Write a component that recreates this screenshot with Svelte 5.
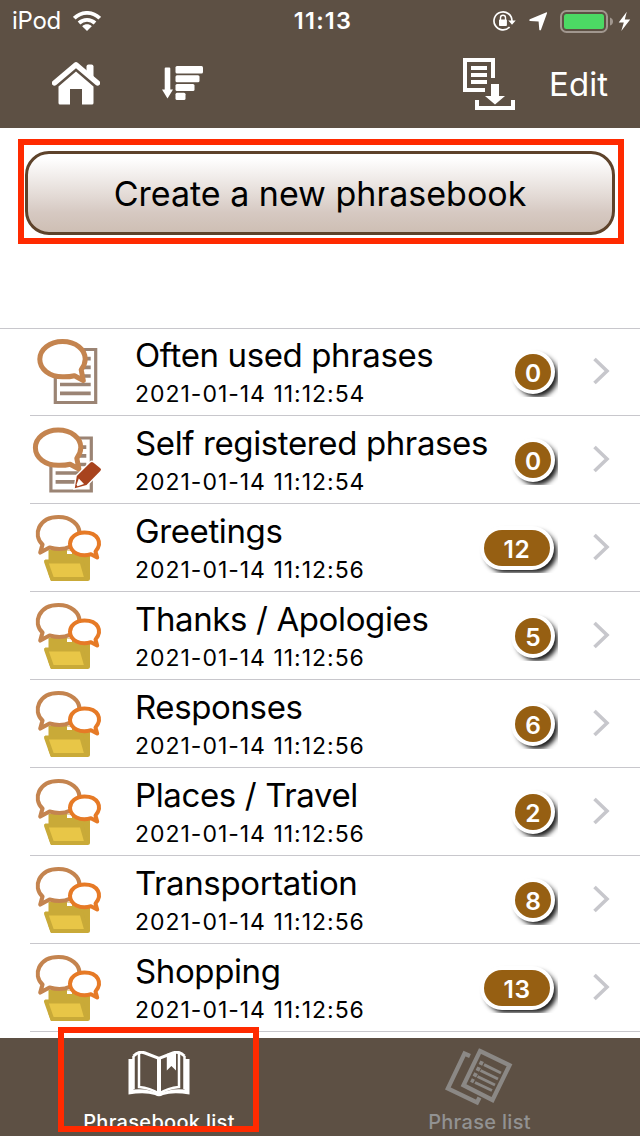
<script>
  const books = [
    { title: 'Often used phrases', date: '2021-01-14 11:12:54', count: 0, icon: 'doc' },
    { title: 'Self registered phrases', date: '2021-01-14 11:12:54', count: 0, icon: 'pencil' },
    { title: 'Greetings', date: '2021-01-14 11:12:56', count: 12, icon: 'folder' },
    { title: 'Thanks / Apologies', date: '2021-01-14 11:12:56', count: 5, icon: 'folder' },
    { title: 'Responses', date: '2021-01-14 11:12:56', count: 6, icon: 'folder' },
    { title: 'Places / Travel', date: '2021-01-14 11:12:56', count: 2, icon: 'folder' },
    { title: 'Transportation', date: '2021-01-14 11:12:56', count: 8, icon: 'folder' },
    { title: 'Shopping', date: '2021-01-14 11:12:56', count: 13, icon: 'folder' }
  ];
</script>

<div class="screen">
  <header>
    <div class="status">
      <div class="carrier">
        <span>iPod</span>
        <svg width="28" height="20" viewBox="0 0 28 20">
          <g fill="none" stroke="#fff" stroke-width="3.8">
            <path d="M1.3 7.2C8.5 .1 19.5 .1 26.7 7.2" />
            <path d="M6 12C10.6 7.7 17.4 7.7 22 12" />
          </g>
          <path d="M9.2 15.2C12 12.7 16 12.7 18.8 15.2L14 20Z" fill="#fff" />
        </svg>
      </div>
      <div class="clock">11:13</div>
      <div class="indicators">
        <svg width="140" height="26" viewBox="0 0 140 26">
          <g fill="none" stroke="#fff" stroke-width="1.7">
            <path d="M17.600 19A9 9 0 1 1 20 13" />
            <path d="M8.500 12V9.800a2.500 2.500 0 0 1 5 0V12" stroke-width="1.400" />
          </g>
          <path d="M16.300 12.500H23.700L20 16.800ZM7.900 11.500h6.200q.8 0 .8.8v4.800q0 .9-.8.9H7.900q-.9 0-.9-.9v-4.800q0-.8.9-.8Z" fill="#fff" />
          <path d="M55 5.200L49 21.800Q48 23 47.300 21.800L46.600 13.400L38 12.900Q36.300 12.300 37.800 11.300L54 4.400Q55.400 4 55 5.200Z" fill="#fff" />
          <rect x="69" y="3" width="46" height="21" rx="5.500" fill="none" stroke="#a1978f" stroke-width="2" />
          <rect x="72" y="6" width="40" height="15" rx="2.500" fill="#4cd964" />
          <path d="M118 9.500Q121 10.500 121 13.500T118 17.500Z" fill="#a1978f" />
          <path d="M134.800 3.700L126.700 14.600H131.800L129.300 23L138.200 11.500H132.800Z" fill="#fff" />
        </svg>
      </div>
    </div>
    <nav>
      <svg class="home" width="48" height="43" viewBox="0 0 48 43" fill="#fff">
        <path d="M2.500 21L24 2.800L45.500 21" fill="none" stroke="#fff" stroke-width="5.400" stroke-linecap="round" stroke-linejoin="round" />
        <path d="M34.500 4.500q0-2 2-2h3q2 0 2 2V18l-7-6Z" />
        <path d="M24 9.500L41.500 24.500V41q0 1.500-1.500 1.500H30V27H18V42.500H8Q6.500 42.500 6.500 41V24.500Z" />
      </svg>
      <svg class="sort" width="42" height="35" viewBox="0 0 42 35" fill="#fff">
        <path d="M2.700 2.500q0-1 1-1h3.600q1 0 1 1V23.500H11L5.500 32.500L0 23.500H2.700Z" />
        <rect x="13.500" y="0" width="27.500" height="7.500" rx="1.500" />
        <rect x="13.500" y="9.300" width="24" height="7" rx="1.500" />
        <rect x="13.500" y="18" width="19" height="7" rx="1.500" />
        <rect x="13.500" y="26.800" width="10" height="7.200" rx="1.500" />
      </svg>
      <svg class="download" width="52" height="52" viewBox="0 0 52 52" fill="#fff">
        <path d="M0 0H32V20H28V4H4V30H22V34H0Z" />
        <path d="M8 8H24V12H8ZM8 15H24V19H8ZM8 22H24V26H8Z" />
        <path d="M28 26H36V38H42L32 46.500L22 38H28Z" />
        <path d="M12 42H16V48H48V42H52V52H12Z" />
      </svg>
      <span class="edit">Edit</span>
    </nav>
  </header>

  <section class="create">
    <div class="highlight">
      <button>Create a new phrasebook</button>
    </div>
  </section>

  <main>
    {#each books as b}
      <div class="row">
        <svg class="icon" width="100" height="88" viewBox="0 0 100 88">
          {#if b.icon === 'folder'}
            <path d="M28.500 46H70V74.500Q70 77 67.500 77H31L28.500 70Z" fill="#c9aa38" />
            <path d="M47 46.500H52V50H47Z" fill="#fff" />
            <path d="M26 57.500H61.500L66.500 75H32.200Z" fill="#e8c647" stroke="#c9aa38" stroke-width="4" stroke-linejoin="round" />
            <path d="M22.500 40.500C12.500 31 18.500 13 38.500 13C51 13 59.500 20.500 59.500 29C59.500 41.500 45 48 29.500 43.500L20.300 48.500Z" fill="#fff" stroke="#c4844f" stroke-width="4.200" stroke-linejoin="round" />
            <path d="M75.500 47.500C83 39 78 28.500 64.500 28.500C55.500 28.500 50 34 50 39.800C50 48.500 60.500 53.500 71 50.200L77.200 53.500Z" fill="#fff" stroke="#e67a26" stroke-width="4" stroke-linejoin="round" />
          {:else}
            <g transform={b.icon === 'pencil' ? 'translate(-4.400 .5)' : 'translate(0 0)'}>
              <path d="M35.300 21.500H75.700V74.500H35.300Z" fill="#fff" stroke="#9b8474" stroke-width="3.200" />
              <path d="M40 30.700H70.700M40 39.400H70.700M40 48H70.700M40 56.500H70.700M40 65.300H70.700" stroke="#9b8474" stroke-width="3.700" />
              <path d="M42.500 13.500C56 13.500 65.200 21.500 65.200 31Q65.200 36.500 61.200 41.700L63.300 52.500L54.500 47.700Q49 49 42.500 48.800C29.500 48.800 19.800 41 19.800 31.200C19.800 21.500 29.500 13.500 42.500 13.500Z" fill="#fff" stroke="#c4844f" stroke-width="5" stroke-linejoin="round" />
            </g>
            {#if b.icon === 'pencil'}
              <path d="M56.800 60L70.500 46.500Q72 45.300 73.500 46.800L80.300 52.200Q81.800 53.500 80.300 55L66.500 69L54.800 72.200Z" fill="#a8431e" stroke="#fff" stroke-width="2.600" paint-order="stroke" />
              <path d="M58.800 62.500L64 68L57.500 70.200L56.500 68.800Z" fill="#fff" />
            {/if}
          {/if}
        </svg>
        <div class="body">
          <div class="text">
            <div class="title">{b.title}</div>
            <div class="date">{b.date}</div>
          </div>
          <div class="count"><span class:wide={b.count > 9}>{b.count}</span></div>
          <svg class="chevron" width="20" height="28" viewBox="0 0 20 28">
            <path d="M2.500 2L15 14L2.500 26" fill="none" stroke="#c7c7cc" stroke-width="3.600" />
          </svg>
        </div>
      </div>
    {/each}
  </main>

  <footer>
    <div class="tab active">
      <svg width="62" height="50" viewBox="0 0 62 50" fill="none" stroke="#fff">
        <path d="M.5 8H5.500V38.500Q20 37 31 43Q42 37 56.500 38.500V8H61.500V43.500Q45 41 35 44Q31 46.500 27 44Q17 41 .5 43.500Z" fill="#fff" stroke="none" />
        <path d="M5.500 5Q11-.5 17 2L31 7.500L45 2Q51-.5 56.500 5" stroke-width="3" />
        <path d="M5.500 5V38M11 2V36Q22 37 31 42.500Q40 37 51 36V2" stroke-width="2.500" />
        <path d="M31 7V42" stroke-width="4" />
        <path d="M56.500 5V38" stroke-width="2.500" />
        <path d="M38.800 3L48 .5V19.500L43.400 15L38.800 19.500Z" fill="#fff" stroke="none" />
      </svg>
      <span>Phrasebook list</span>
      <div class="focus"></div>
    </div>
    <div class="tab">
      <svg width="68" height="58" viewBox="0 0 68 58" fill="none" stroke="#8b8885">
        <path d="M25 8L19.500 5.500L2.800 40.500L32 54.500L34.500 49.500" stroke-width="4.300" />
        <path d="M35 3L64.500 17.200L47.500 52L18.500 37.200Z" stroke-width="4.300" />
        <path d="M39 16.700L56 25M35.500 22.500L53 31M32.500 28.500L50 37M30 34.500L47 42.500" stroke-width="3" />
        <path d="M34.500 14.200L38 15.900M31.500 20.200L35 21.900M28.500 26L32 27.700M26 32L29 33.500" stroke-width="4" />
      </svg>
      <span>Phrase list</span>
    </div>
  </footer>
</div>

<style>
  :global(body) { margin: 0; }
  .screen {
    width: 640px; height: 1136px; overflow: hidden; background: #fff; color: #000;
    display: flex; flex-direction: column;
    font-family: Inter, "Liberation Sans", sans-serif;
  }
  header { height: 128px; flex: none; background: #5d5044; color: #fff; }
  .status { height: 40px; display: grid; grid-template-columns: 250px 1fr 150px; align-items: center; }
  .carrier { display: flex; align-items: center; gap: 12px; padding-left: 12px; font-size: 24px; line-height: 40px; height: 40px; }
  .carrier span { width: 49px; letter-spacing: -0.3px; white-space: nowrap; padding-top: 1px; }
  .clock { text-align: center; font-size: 23.5px; font-weight: 600; line-height: 40px; height: 40px; padding-top: 1px; width: 146px; letter-spacing: 1.2px; }
  .indicators { display: flex; justify-content: flex-end; padding-right: 8px; }
  nav { height: 88px; display: flex; align-items: flex-start; }
  .home { margin: 22px 0 0 52px; }
  .sort { margin: 26px 0 0 62px; }
  .download { margin: 18px 0 0 259px; }
  .edit { margin-left: 34px; font-size: 33px; line-height: 40px; margin-top: 24px; letter-spacing: .1px; font-weight: 400; }
  .create { height: 200px; flex: none; box-sizing: border-box; padding: 11px 16px 0 18px; }
  .highlight { height: 105px; box-sizing: border-box; border: 6px solid #ff2a00; padding: 6px 3px 3px 1px; }
  button {
    display: block; width: 100%; height: 84px; box-sizing: border-box; padding: 1px 0 0;
    border: 3px solid #5e432b; border-radius: 24px;
    background: linear-gradient(#fff 5%, #e2d9d4 55%, #d6c9c2 75%, #cebfb4);
    font: 34px/40px Inter, "Liberation Sans", sans-serif; color: #000;
  }
  main { height: 710px; flex: none; overflow: hidden; box-sizing: border-box; border-top: 1px solid #c8c7cc; }
  .row { height: 88px; display: flex; padding-left: 20px; }
  .row:first-child { height: 87px; }
  .row:first-child .icon { margin-top: -1px; }
  .icon { flex: none; margin-right: -90px; position: relative; }
  .body { flex: 1; display: flex; box-sizing: border-box; height: 100%; border-bottom: 1px solid #c8c7cc; }
  .row:first-child .body > * { margin-top: -1px; }
  .text { width: 349px; padding-left: 105px; white-space: nowrap; }
  .title { font-size: 33px; line-height: 40px; padding-top: 7px; letter-spacing: -.38px; }
  .date { font-size: 23px; line-height: 28px; padding-top: 5px; letter-spacing: .98px; }
  .count { width: 80px; height: 69px; flex: none; margin-left: -6px; overflow: hidden; display: flex; justify-content: flex-end; }
  .count span {
    margin: 26px 7px 0 0; width: 36px; height: 36px; border-radius: 18px; background: #965f12; color: #fff;
    text-align: center; font-size: 24.5px; font-weight: 600; line-height: 38px;
    box-shadow: 0 0 0 4px #fff, 4px 4px 5px 3px #1b1b1b;
  }
  .count .wide { width: 66px; margin-right: 8px; letter-spacing: .6px; }
  .chevron { margin-left: 34px; padding-top: 29px; }
  footer { height: 98px; flex: none; background: #5d5044; display: grid; grid-template-columns: 1fr 1fr; }
  .tab { position: relative; display: flex; flex-direction: column; align-items: center; color: #929292; font-size: 20px; font-weight: 500; }
  .tab svg { margin-top: 10px; margin-right: 3px; }
  .tab span { line-height: 24px; letter-spacing: .3px; margin-top: 4px; padding-right: 1px; }
  .tab.active { color: #fff; }
  .tab.active svg { margin-top: 13px; margin-right: 2px; }
  .tab.active span { margin-top: 9px; padding-right: 2px; }
  .focus { position: absolute; left: 58px; top: -11px; width: 201px; height: 105px; box-sizing: border-box; border: 6px solid #ff2a00; }
</style>
